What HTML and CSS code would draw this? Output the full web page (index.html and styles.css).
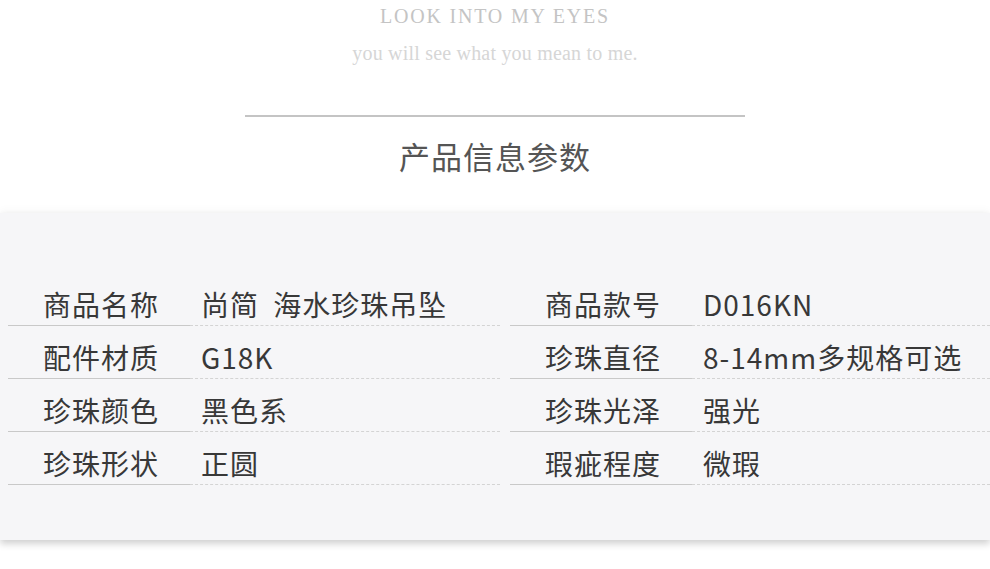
FILE: index.html
```html
<!DOCTYPE html>
<html lang="zh-CN">
<head>
<meta charset="utf-8">
<title>产品信息参数</title>
<link rel="stylesheet" href="styles.css">
</head>
<body>
<header class="intro">
  <p class="eng1">LOOK INTO MY EYES</p>
  <p class="eng2">you will see what you mean to me.</p>
  <div class="rule"></div>
  <h1 class="title">产品信息参数</h1>
</header>
<section class="panel">
  <div class="cell"><span class="label">商品名称</span><span class="value">尚简 海水珍珠吊坠</span></div>
  <div class="cell"><span class="label">商品款号</span><span class="value">D016KN</span></div>
  <div class="cell"><span class="label">配件材质</span><span class="value">G18K</span></div>
  <div class="cell"><span class="label">珍珠直径</span><span class="value">8-14mm多规格可选</span></div>
  <div class="cell"><span class="label">珍珠颜色</span><span class="value">黑色系</span></div>
  <div class="cell"><span class="label">珍珠光泽</span><span class="value">强光</span></div>
  <div class="cell"><span class="label">珍珠形状</span><span class="value">正圆</span></div>
  <div class="cell"><span class="label">瑕疵程度</span><span class="value">微瑕</span></div>
</section>
</body>
</html>
```
FILE: styles.css
```css
* { box-sizing: border-box; }
html, body {
  margin: 0;
  padding: 0;
  background: #ffffff;
}
body {
  width: 990px;
  height: 569px;
  overflow: hidden;
  font-family: "Noto Sans CJK SC", "Noto Sans", sans-serif;
}
.intro {
  display: flex;
  flex-direction: column;
  align-items: center;
  padding-top: 4px;
}
.eng1 {
  margin: 0;
  font-family: "Liberation Serif", serif;
  font-size: 20px;
  line-height: 24px;
  letter-spacing: 1.8px;
  color: #c4c4c4;
}
.eng2 {
  margin: 13px 0 0;
  font-family: "Liberation Serif", serif;
  font-size: 20px;
  line-height: 24px;
  letter-spacing: 0.2px;
  color: #d6d6d6;
}
.rule {
  width: 500px;
  height: 2px;
  margin-top: 50px;
  background: #c4c4c4;
}
.title {
  margin: 19px 0 0;
  font-size: 31px;
  line-height: 40px;
  font-weight: 400;
  letter-spacing: 1px;
  color: #555555;
}
.panel {
  margin-top: 37px;
  background: #f6f6f8;
  display: grid;
  grid-template-columns: 492px 1fr;
  column-gap: 10px;
  padding: 60px 0 55px 8px;
  box-shadow: 0 4px 7px rgba(0, 0, 0, 0.18), 0 -3px 8px rgba(0, 0, 0, 0.03);
}
.cell {
  display: flex;
  height: 53px;
  font-size: 28px;
  letter-spacing: 1px;
  color: #383838;
}
.label {
  width: 182px;
  padding: 15px 0 5px 35px;
  line-height: 32px;
  border-bottom: 1px solid #c9c9c9;
}
.value {
  flex: 1;
  padding: 15px 0 5px 11px;
  line-height: 32px;
  word-spacing: 7px;
  border-bottom: 1px dashed #d4d4d4;
  white-space: nowrap;
}
```
